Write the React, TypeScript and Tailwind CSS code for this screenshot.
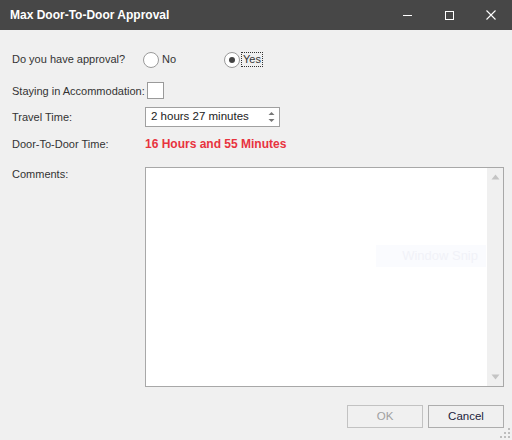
import React from 'react'

function Radio({ label, checked, focused }: { label: string; checked?: boolean; focused?: boolean }) {
  return (
    <div className="flex items-center w-[81px]">
      <span className="w-[16px] h-[16px] rounded-full border border-[#9a9a9a] bg-white flex items-center justify-center">
        {checked && <span className="w-[6px] h-[6px] rounded-full bg-[#444]" />}
      </span>
      <span
        className={
          'ml-[2px] px-[1px] leading-[13px] ' +
          (focused ? 'outline outline-1 outline-dotted outline-[#333]' : '')
        }
      >
        {label}
      </span>
    </div>
  )
}

function Label({ children }: { children: React.ReactNode }) {
  return <div className="w-[133px] shrink-0">{children}</div>
}

export default function App() {
  return (
    <div
      className="w-[512px] h-[440px] bg-[#f0f0f0] flex flex-col text-[11px] text-[#333] overflow-hidden relative"
      style={{ fontFamily: '"Liberation Sans", Arial, sans-serif' }}
    >
      {/* title bar */}
      <div className="h-[30px] bg-[#474747] flex items-center shrink-0">
        <div className="pl-[10px] text-white font-bold text-[12px] flex-1">Max Door-To-Door Approval</div>
        <div className="flex items-center h-full">
          <div className="w-[42px] h-full flex items-center justify-center">
            <span className="w-[9px] h-px bg-white" />
          </div>
          <div className="w-[42px] h-full flex items-center justify-center">
            <span className="w-[9px] h-[9px] border border-white" />
          </div>
          <div className="w-[42px] h-full flex items-center justify-center">
            <svg width="10" height="10" viewBox="0 0 10 10">
              <path d="M0.5 0.5 L9.5 9.5 M9.5 0.5 L0.5 9.5" stroke="white" strokeWidth="1.1" />
            </svg>
          </div>
        </div>
      </div>

      <div className="flex flex-col pl-[12px] pr-[8px]">
        <div className="flex items-center h-[20px] mt-[19px] pt-[1px]">
          <Label>Do you have approval?</Label>
          <div className="flex items-center -ml-[2px]">
            <Radio label="No" />
            <Radio label="Yes" checked focused />
          </div>
        </div>

        <div className="flex items-center h-[16px] mt-[13px]">
          <div className="shrink-0 pt-[2px]">Staying in Accommodation:</div>
          <span className="ml-[2px] w-[17px] h-[17px] border border-[#9a9a9a] bg-white" />
        </div>

        <div className="flex items-center h-[20px] mt-[9px]">
          <Label>
            <div className="pt-[1px]">Travel Time:</div>
          </Label>
          <div className="w-[135px] h-[20px] border border-[#a0a0a0] bg-white flex items-center pl-[5px] pr-[4px] text-[11.5px]">
            <span className="flex-1 text-[#222]">2 hours 27 minutes</span>
            <svg width="7" height="12" viewBox="0 0 7 12">
              <path d="M3.5 1 L6.5 4 L0.5 4 Z" fill="#777" />
              <path d="M3.5 11 L6.5 8 L0.5 8 Z" fill="#777" />
            </svg>
          </div>
        </div>

        <div className="flex items-center h-[18px] mt-[8px]">
          <Label>
            <div className="pt-[1px]">Door-To-Door Time:</div>
          </Label>
          <span className="font-bold text-[#e8333e] text-[12px]">16 Hours and 55 Minutes</span>
        </div>

        <div className="flex mt-[14px]">
          <Label>
            <div className="-mt-[1px]">Comments:</div>
          </Label>
          <div className="w-[359px] h-[220px] border border-[#a8a8a8] bg-white flex relative">
            <div className="flex-1" />
            <div className="w-[16px] bg-[#f0f0f0] flex flex-col items-center justify-between py-[6px]">
              <svg width="9" height="6" viewBox="0 0 9 6">
                <path d="M4.5 0.5 L8.5 5.5 L0.5 5.5 Z" fill="#c4c4c4" />
              </svg>
              <svg width="9" height="6" viewBox="0 0 9 6">
                <path d="M4.5 5.5 L8.5 0.5 L0.5 0.5 Z" fill="#c4c4c4" />
              </svg>
            </div>
            <div className="absolute left-[230px] top-[77px] w-[110px] h-[22px] bg-[#fafbfe] flex items-center justify-end pr-[8px] text-[#f1f2f8] text-[13px]">
              Window Snip
            </div>
          </div>
        </div>

        <div className="flex justify-end gap-[5px] mt-[18px] pr-[0px] text-[11.5px]">
          <div className="w-[76px] h-[23px] border border-[#c2c2c2] bg-[#f0f0f0] flex items-center justify-center text-[#a0a0a0]">
            OK
          </div>
          <div className="w-[76px] h-[23px] border border-[#adadad] bg-[#f0f0f0] flex items-center justify-center text-[#1c1c3c]">
            Cancel
          </div>
        </div>
      </div>

      <svg className="absolute right-[2px] bottom-[2px]" width="10" height="10" viewBox="0 0 10 10">
        <rect x="8" y="0" width="2" height="2" fill="#bdbdbd" />
        <rect x="4" y="4" width="2" height="2" fill="#bdbdbd" />
        <rect x="8" y="4" width="2" height="2" fill="#bdbdbd" />
        <rect x="0" y="8" width="2" height="2" fill="#bdbdbd" />
        <rect x="4" y="8" width="2" height="2" fill="#bdbdbd" />
        <rect x="8" y="8" width="2" height="2" fill="#bdbdbd" />
      </svg>
    </div>
  )
}
